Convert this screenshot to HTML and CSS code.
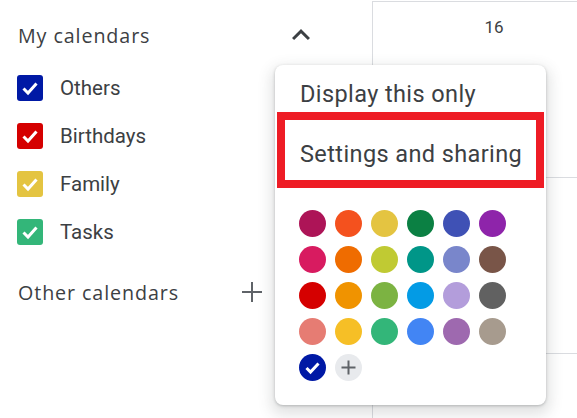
FILE: index.html
```html
<!DOCTYPE html>
<html lang="en">
<head>
    <meta charset="UTF-8">
    <meta name="viewport" content="width=device-width, initial-scale=1.0">
    <title>Calendar</title>
    <link rel="stylesheet" href="styles.css">
</head>
<body>
    <div class="page">
        <aside class="sidebar">
            <div class="section-head">
                <span class="section-title">My calendars</span>
                <svg class="chevron" width="36" height="36" viewBox="0 0 24 24">
                    <path d="M12 8l-6 6 1.41 1.41L12 10.83l4.59 4.58L18 14z" fill="#3c4043"/>
                </svg>
            </div>

            <ul class="cal-list">
                <li class="cal-item">
                    <span class="check" style="background:#0019a5"><svg width="26" height="26" viewBox="0 0 26 26"><polyline points="6.5,13.5 11,18 19.5,8.5"/></svg></span>
                    <span class="cal-name">Others</span>
                </li>
                <li class="cal-item">
                    <span class="check" style="background:#d50000"><svg width="26" height="26" viewBox="0 0 26 26"><polyline points="6.5,13.5 11,18 19.5,8.5"/></svg></span>
                    <span class="cal-name">Birthdays</span>
                </li>
                <li class="cal-item">
                    <span class="check" style="background:#e4c441"><svg width="26" height="26" viewBox="0 0 26 26"><polyline points="6.5,13.5 11,18 19.5,8.5"/></svg></span>
                    <span class="cal-name">Family</span>
                </li>
                <li class="cal-item">
                    <span class="check" style="background:#33b679"><svg width="26" height="26" viewBox="0 0 26 26"><polyline points="6.5,13.5 11,18 19.5,8.5"/></svg></span>
                    <span class="cal-name">Tasks</span>
                </li>
            </ul>

            <div class="section-head other">
                <span class="section-title">Other calendars</span>
                <svg class="plus" width="22" height="22" viewBox="0 0 22 22">
                    <path d="M11 1v20M1 11h20" stroke="#5f6368" stroke-width="2"/>
                </svg>
            </div>
        </aside>

        <main class="day-grid">
            <div class="day-head">16</div>
            <div class="day-row"></div>
            <div class="day-row"></div>
        </main>
    </div>

    <!-- options menu for the Others calendar -->
    <div class="menu">
        <div class="menu-item">Display this only</div>
        <div class="menu-item highlighted">Settings and sharing</div>

        <div class="swatches">
            <span class="dot" style="background:#ad1457"></span>
            <span class="dot" style="background:#f4511e"></span>
            <span class="dot" style="background:#e4c441"></span>
            <span class="dot" style="background:#0b8043"></span>
            <span class="dot" style="background:#3f51b5"></span>
            <span class="dot" style="background:#8e24aa"></span>

            <span class="dot" style="background:#d81b60"></span>
            <span class="dot" style="background:#ef6c00"></span>
            <span class="dot" style="background:#c0ca33"></span>
            <span class="dot" style="background:#009688"></span>
            <span class="dot" style="background:#7986cb"></span>
            <span class="dot" style="background:#795548"></span>

            <span class="dot" style="background:#d50000"></span>
            <span class="dot" style="background:#f09300"></span>
            <span class="dot" style="background:#7cb342"></span>
            <span class="dot" style="background:#039be5"></span>
            <span class="dot" style="background:#b39ddb"></span>
            <span class="dot" style="background:#616161"></span>

            <span class="dot" style="background:#e67c73"></span>
            <span class="dot" style="background:#f6bf26"></span>
            <span class="dot" style="background:#33b679"></span>
            <span class="dot" style="background:#4285f4"></span>
            <span class="dot" style="background:#9e69af"></span>
            <span class="dot" style="background:#a79b8e"></span>

            <span class="dot selected" style="background:#0019a5">
                <svg width="27" height="27" viewBox="0 0 27 27"><polyline points="7.5,14 11.5,18 19.5,9.5"/></svg>
            </span>
            <span class="dot add">
                <svg width="27" height="27" viewBox="0 0 27 27"><path d="M13.5 6.5v14M6.5 13.5h14"/></svg>
            </span>
        </div>
    </div>
</body>
</html>
```

FILE: styles.css
```css
body {
    margin: 0;
    padding: 0;
    font-family: Roboto, "Noto Sans", sans-serif;
    color: #3c4043;
    background-color: #fff;
    overflow: hidden;
}

.page {
    display: flex;
    height: 418px;
    overflow: hidden;
}

/* left column */
.sidebar {
    width: 372px;
    flex-shrink: 0;
    padding: 11px 0 0 18px;
    box-sizing: border-box;
}

.section-head {
    display: flex;
    align-items: center;
    height: 48px;
    width: 301px;
}

.section-title {
    flex: 1;
    font-family: "Open Sans", Roboto, sans-serif;
    font-size: 19.7px;
    letter-spacing: 0.9px;
    color: #3c4043;
}

.cal-list {
    list-style: none;
    margin: 5px 0 0;
    padding: 0;
}

.cal-item {
    display: flex;
    align-items: center;
    height: 48px;
}

.check {
    display: block;
    width: 26px;
    height: 26px;
    border-radius: 3px;
    margin-left: -1px;
}

.check svg {
    display: block;
}

.check polyline {
    fill: none;
    stroke: #fff;
    stroke-width: 3;
}

.cal-name {
    margin-left: 17px;
    font-size: 20.5px;
    color: #3c4043;
}

.section-head.other {
    margin-top: 12px;
}

.plus {
    margin-right: 56px;
}

/* day column */
.day-grid {
    flex: 1;
    margin-top: 1px;
    border-top: 1px solid #dadce0;
    border-left: 1px solid #dadce0;
    overflow: hidden;
}

.day-head {
    width: 242px;
    height: 176px;
    text-align: center;
    padding-top: 15px;
    box-sizing: border-box;
    font-size: 17px;
    color: #3c4043;
    border-bottom: 1px solid #dadce0;
}

.day-row {
    height: 175px;
    border-bottom: 1px solid #dadce0;
}

/* popup menu */
.menu {
    position: absolute;
    left: 275px;
    top: 65px;
    width: 271px;
    height: 340px;
    background: #fff;
    border-radius: 8px;
    box-shadow: 0 6px 14px 4px rgba(60, 64, 67, 0.15), 0 1px 3px rgba(60, 64, 67, 0.3);
    box-sizing: border-box;
}

.menu-item {
    font-size: 23.5px;
    letter-spacing: 0.4px;
    color: #3c4043;
    height: 47px;
    padding: 15px 0 0 25px;
    box-sizing: border-box;
    white-space: nowrap;
}

.menu-item.highlighted {
    margin: 0 2px;
    height: 76px;
    border: 8px solid #ee1c25;
    padding: 20px 0 0 15px;
}

.swatches {
    display: grid;
    grid-template-columns: repeat(6, 27px);
    grid-auto-rows: 27px;
    gap: 9px;
    margin: 22px 0 0 24px;
}

.dot {
    display: block;
    border-radius: 50%;
}

.dot svg {
    display: block;
}

.dot.selected polyline {
    fill: none;
    stroke: #fff;
    stroke-width: 3;
}

.dot.add {
    background: #e8eaed;
}

.dot.add path {
    stroke: #5f6368;
    stroke-width: 2;
}
```
